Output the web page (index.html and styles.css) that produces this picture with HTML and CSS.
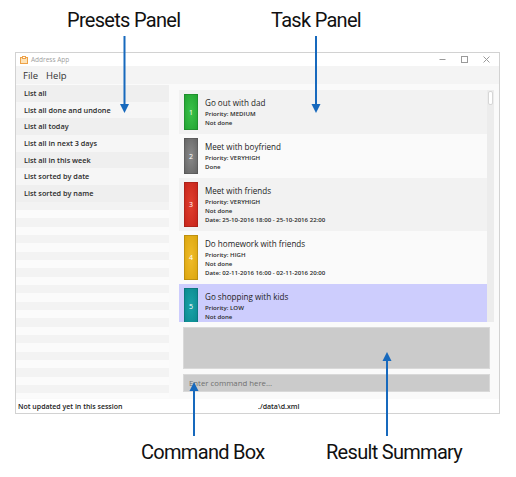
FILE: index.html
```html
<!DOCTYPE html>
<html lang="en">
<head>
  <meta charset="UTF-8">
  <meta name="viewport" content="width=device-width, initial-scale=1.0">
  <title>Address App - annotated</title>
  <link rel="stylesheet" href="styles.css">
</head>
<body>
  <div class="page">
    <div class="callouts callouts-top">
      <span class="callout">Presets Panel</span>
      <span class="callout">Task Panel</span>
    </div>

    <div class="window">
      <div class="titlebar">
        <svg class="app-icon" width="8" height="8" viewBox="0 0 8 8">
          <rect x="0.5" y="1.5" width="7" height="6" fill="#fde3b8" stroke="#eea248"/>
          <rect x="2.5" y="0.5" width="3" height="2" fill="#fff" stroke="#eea248"/>
        </svg>
        <span class="app-title">Address App</span>
        <div class="win-controls">
          <svg width="7" height="7" viewBox="0 0 7 7"><line x1="0.5" y1="3.5" x2="6.5" y2="3.5" stroke="#9a9a9a"/></svg>
          <svg width="7" height="7" viewBox="0 0 7 7"><rect x="0.5" y="0.5" width="6" height="6" fill="none" stroke="#9a9a9a"/></svg>
          <svg width="7" height="7" viewBox="0 0 7 7"><path d="M0.5 0.5 L6.5 6.5 M6.5 0.5 L0.5 6.5" stroke="#9a9a9a"/></svg>
        </div>
      </div>

      <div class="menubar">
        <span>File</span>
        <span>Help</span>
      </div>

      <div class="main">
        <div class="presets">
          <div class="preset">List all</div>
          <div class="preset">List all done and undone</div>
          <div class="preset">List all today</div>
          <div class="preset">List all in next 3 days</div>
          <div class="preset">List all in this week</div>
          <div class="preset">List sorted by date</div>
          <div class="preset">List sorted by name</div>
        </div>

        <div class="right">
          <div class="tasklist">
            <div class="cards">
              <div class="card">
                <div class="bar bar-green">1</div>
                <div class="card-body">
                  <div class="task-name">Go out with dad</div>
                  <div class="task-line">Priority: MEDIUM</div>
                  <div class="task-line">Not done</div>
                </div>
              </div>
              <div class="card">
                <div class="bar bar-gray">2</div>
                <div class="card-body">
                  <div class="task-name">Meet with boyfriend</div>
                  <div class="task-line">Priority: VERYHIGH</div>
                  <div class="task-line">Done</div>
                </div>
              </div>
              <div class="card">
                <div class="bar bar-red">3</div>
                <div class="card-body">
                  <div class="task-name">Meet with friends</div>
                  <div class="task-line">Priority: VERYHIGH</div>
                  <div class="task-line">Not done</div>
                  <div class="task-line">Date: 25-10-2016 18:00 - 25-10-2016 22:00</div>
                </div>
              </div>
              <div class="card">
                <div class="bar bar-yellow">4</div>
                <div class="card-body">
                  <div class="task-name">Do homework with friends</div>
                  <div class="task-line">Priority: HIGH</div>
                  <div class="task-line">Not done</div>
                  <div class="task-line">Date: 02-11-2016 16:00 - 02-11-2016 20:00</div>
                </div>
              </div>
              <div class="card selected">
                <div class="bar bar-teal">5</div>
                <div class="card-body">
                  <div class="task-name">Go shopping with kids</div>
                  <div class="task-line">Priority: LOW</div>
                  <div class="task-line">Not done</div>
                </div>
              </div>
            </div>
            <div class="scrollbar"><div class="thumb"></div></div>
          </div>

          <div class="result"></div>
          <div class="command">Enter command here...</div>
        </div>
      </div>

      <div class="statusbar">
        <span>Not updated yet in this session</span>
        <span>./data\d.xml</span>
      </div>
    </div>

    <div class="callouts callouts-bottom">
      <span class="callout">Command Box</span>
      <span class="callout">Result Summary</span>
    </div>

    <!-- annotation arrows -->
    <svg class="arrows" width="516" height="477" viewBox="0 0 516 477">
      <g fill="#1769bd" stroke="#1769bd" stroke-width="2">
        <line x1="124.5" y1="36" x2="124.5" y2="106"/>
        <polygon stroke="none" points="120,104 129,104 124.5,113"/>
        <line x1="316" y1="36" x2="316" y2="106"/>
        <polygon stroke="none" points="311.5,104 320.5,104 316,113"/>
        <line x1="194" y1="436" x2="194" y2="389"/>
        <polygon stroke="none" points="189.5,391 198.5,391 194,382"/>
        <line x1="387" y1="436" x2="387" y2="359"/>
        <polygon stroke="none" points="382.5,361 391.5,361 387,352"/>
      </g>
    </svg>
  </div>
</body>
</html>
```

FILE: styles.css
```css
* {
  margin: 0;
  padding: 0;
  box-sizing: border-box;
}

body {
  background: white;
  font-family: 'Open Sans', 'Noto Sans', sans-serif;
  color: #222;
}

.page {
  position: relative;
  width: 516px;
  height: 477px;
  overflow: hidden;
}

/* callout labels */
.callouts {
  display: grid;
  font-family: Roboto, 'Noto Sans', sans-serif;
  font-size: 20px;
  letter-spacing: -0.7px;
  color: #111;
  line-height: 24px;
}

.callouts-top {
  height: 52px;
  padding-top: 8px;
  grid-template-columns: 67px 204px auto;
}

.callouts-top::before,
.callouts-bottom::before {
  content: '';
}

.callouts-bottom {
  padding-top: 26px;
  grid-template-columns: 141px 185px auto;
}

.arrows {
  position: absolute;
  left: 0;
  top: 0;
  pointer-events: none;
}

/* app window */
.window {
  margin-left: 15px;
  width: 485px;
  height: 362px;
  border: 1px solid #d2d2d2;
  background: #fafafa;
  display: flex;
  flex-direction: column;
}

.titlebar {
  height: 13px;
  background: white;
  display: flex;
  align-items: center;
  padding: 0 9px 0 4px;
}

.app-title {
  margin-left: 3px;
  font-size: 6.5px;
  color: #a0a0a0;
}

.win-controls {
  margin-left: auto;
  display: flex;
  gap: 15px;
}

.menubar {
  height: 18px;
  background: #f4f4f4;
  display: flex;
  align-items: center;
  gap: 8px;
  padding-left: 7px;
  font-size: 9.5px;
  color: #333;
}

.main {
  flex: 1;
  display: flex;
  min-height: 0;
}

/* presets panel */
.presets {
  width: 153px;
  margin-top: 1px;
  margin-bottom: 1px;
  background: repeating-linear-gradient(#f3f3f3 0, #f3f3f3 8.33px, #fbfbfb 8.33px, #fbfbfb 16.67px);
}

.preset {
  height: 16.67px;
  line-height: 16.67px;
  padding-left: 8px;
  font-size: 7.3px;
  font-weight: 600;
  color: #2a2a2a;
  background: #efefef;
}

.preset:nth-child(even) {
  background: #f6f6f6;
}

/* task panel */
.right {
  flex: 1;
  display: flex;
  flex-direction: column;
  padding: 6px 5px 7px 10px;
}

.tasklist {
  height: 232px;
  display: flex;
  background: white;
}

.cards {
  flex: 1;
  overflow: hidden;
}

.card {
  display: flex;
  padding: 4px 5px;
  background: #f2f2f2;
}

.card:nth-child(even) {
  background: #fafafa;
}

.card.selected {
  background: #cdcdfd;
}

.bar {
  width: 14px;
  display: flex;
  align-items: center;
  justify-content: center;
  font-size: 7px;
  color: white;
  border: 1px solid rgba(0,0,0,0.15);
}

.bar-green { background: radial-gradient(ellipse at center, #3cc24a 0%, #22a532 100%); }
.bar-gray { background: radial-gradient(ellipse at center, #8a8a8a 0%, #666 100%); }
.bar-red { background: radial-gradient(ellipse at center, #e0402e 0%, #c8251b 100%); }
.bar-yellow { background: radial-gradient(ellipse at center, #f0bc2a 0%, #dca60e 100%); }
.bar-teal { background: radial-gradient(ellipse at center, #1aa3a8 0%, #0b8a90 100%); }

.card-body {
  padding: 3px 0 3px 7px;
}

.task-name {
  font-size: 8.1px;
  line-height: 12px;
  color: #222;
}

.task-line {
  font-size: 6.1px;
  font-weight: 600;
  line-height: 9px;
  color: #2a2a2a;
}

.scrollbar {
  width: 7px;
  background: #ececec;
  padding: 1px;
}

.thumb {
  height: 14px;
  background: white;
  border: 1px solid #d6d6d6;
  border-radius: 2px;
}

.result {
  margin: 5px 4px 0 4px;
  height: 42px;
  background: #cbcbcb;
  border: 1px solid #d9d9d9;
}

.command {
  margin: 5px 4px 0 4px;
  height: 18px;
  line-height: 17px;
  padding-left: 5px;
  background: #cbcbcb;
  border: 1px solid #d9d9d9;
  font-size: 7.8px;
  color: #707070;
}

.statusbar {
  height: 14px;
  display: grid;
  grid-template-columns: 240px auto;
  align-items: center;
  padding-left: 2px;
  background: white;
  font-size: 7px;
  font-weight: 600;
  color: #222;
}
```
